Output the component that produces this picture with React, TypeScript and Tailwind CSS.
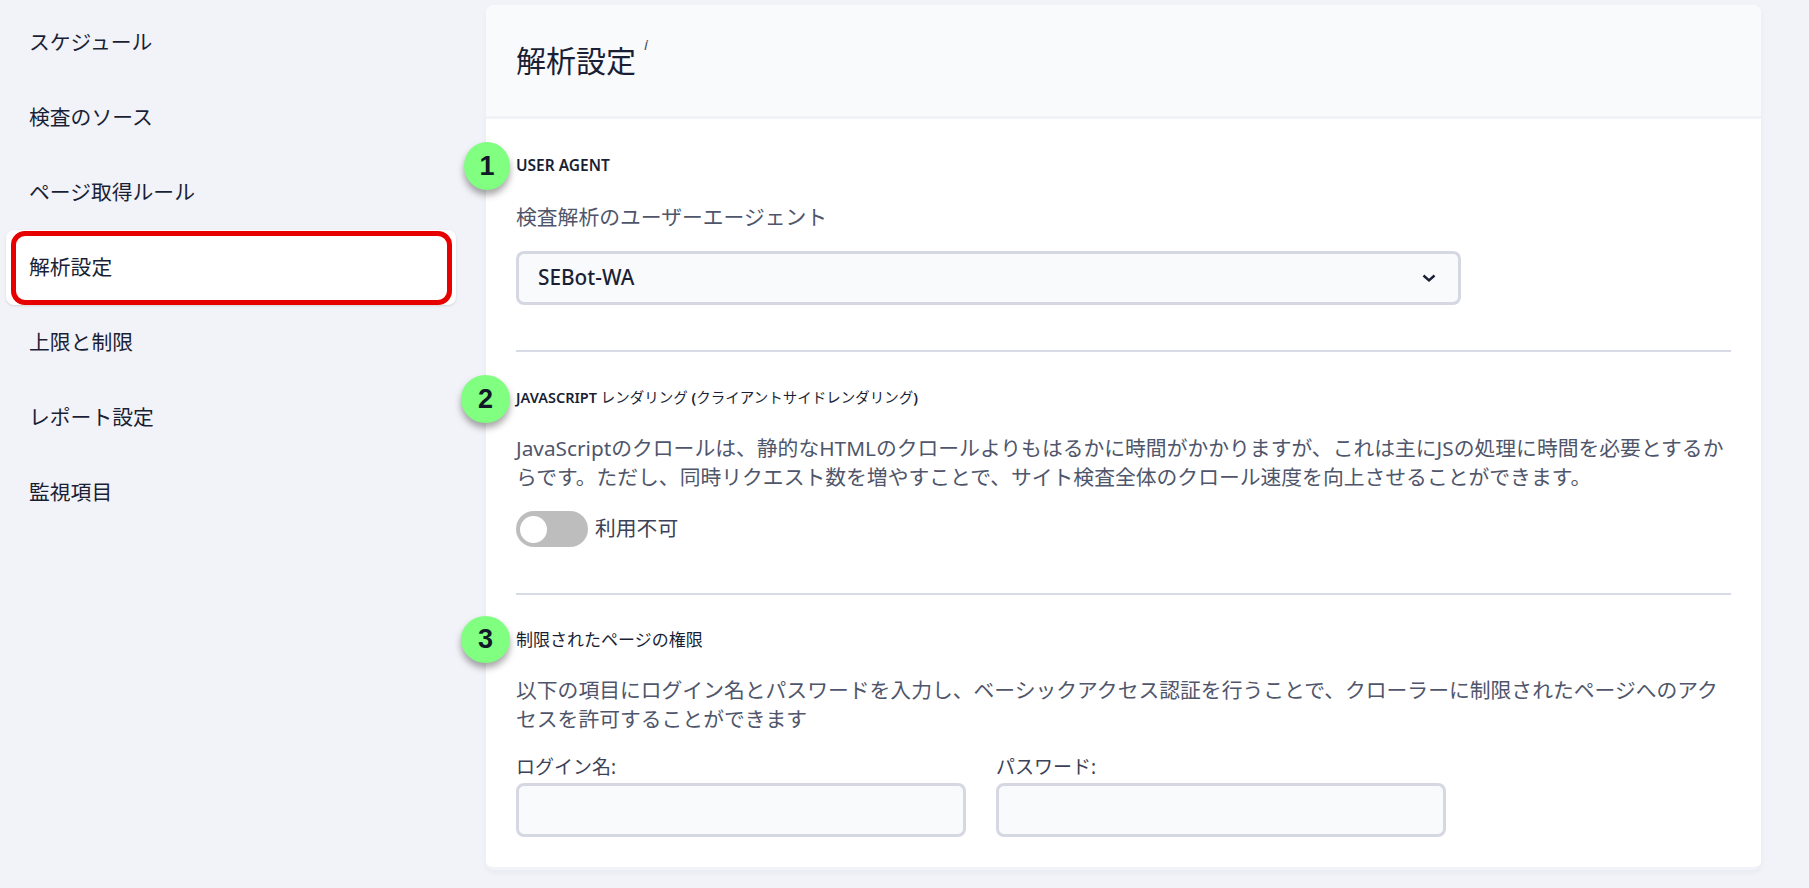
import React from "react";

const navItems = ["スケジュール", "検査のソース", "ページ取得ルール", "解析設定", "上限と制限", "レポート設定", "監視項目"];

function Badge({ n, className }: { n: string; className: string }) {
  return (
    <div
      className={`absolute flex items-center justify-center rounded-[50%] bg-[#80ff80] font-['Liberation_Sans',sans-serif] text-[27px] font-bold text-[#111827] shadow-[0_5px_7px_rgba(0,0,0,0.35)] ${className}`}
    >
      {n}
    </div>
  );
}

function Field({ label }: { label: string }) {
  return (
    <div className="w-[450px]">
      <div className="h-[24px] text-[19px] leading-[24px] text-[#3c4257]">{label}</div>
      <div className="mt-[4px] h-[54px] rounded-lg border-[3px] border-[#d5d7e2] bg-[#f9fafc]" />
    </div>
  );
}

export default function App() {
  return (
    <div className="relative flex h-[888px] w-full overflow-hidden bg-[#f2f3f8] font-['Noto_Sans','Noto_Sans_CJK_JP',sans-serif] text-[#1a1f36]">
      <nav className="w-[486px] shrink-0 pt-[5px] pl-[6px]">
        {navItems.map((item, i) => (
          <div
            key={item}
            className={`relative flex h-[75px] w-[450px] items-center rounded-lg pl-[23px] text-[20.8px] ${
              i === 3 ? "bg-white shadow-sm" : ""
            }`}
          >
            {item}
            {i === 3 && (
              <div className="absolute top-[1px] right-[4px] bottom-0 left-[5px] rounded-[14px] border-[5px] border-[#e80000]" />
            )}
          </div>
        ))}
      </nav>

      <main className="mt-[5px] h-[865px] w-[1275px] shrink-0 rounded-lg border-b-[3px] border-[#f2f3f8] bg-white shadow-[0_3px_6px_rgba(0,0,0,0.04)]">
        <header className="flex h-[114px] items-center rounded-t-lg border-b-[3px] border-[#f2f3f8] bg-[#f9fafc] px-[30px]">
          <h1 className="text-[30px] leading-[40px] font-normal">
            解析設定
            <sup className="ml-[8px] align-[14px] text-[15px] leading-none text-[#4f566b] italic">i</sup>
          </h1>
        </header>

        <section className="mx-[30px] border-b-2 border-[#d8dae5] pt-[34px] pb-[45px]">
          <h2 className="h-[24px] text-[15.5px] leading-[24px] font-semibold">USER AGENT</h2>
          <p className="mt-[26px] h-[29px] text-[20.8px] leading-[29px] text-[#4f566b]">検査解析のユーザーエージェント</p>
          <div className="mt-[19px] flex h-[54px] w-[945px] items-center justify-between rounded-lg border-[3px] border-[#d5d7e2] bg-[#f9fafc] pr-[22px] pl-[19px]">
            <span className="text-[20.8px] font-medium">SEBot-WA</span>
            <svg width="14" height="10" viewBox="0 0 14 10" fill="none" stroke="#1a1f36" strokeWidth="2.4" aria-hidden="true">
              <path d="M1.5 2.5 7 7.5 12.5 2.5" />
            </svg>
          </div>
        </section>

        <section className="mx-[30px] border-b-2 border-[#d8dae5] pt-[33px] pb-[46px]">
          <h2 className="h-[24px] text-[14.5px] leading-[24px] font-semibold whitespace-nowrap">
            JAVASCRIPT <span className="font-normal">レンダリング</span> (<span className="font-normal">クライアントサイドレンダリング</span>)
          </h2>
          <p className="mt-[25px] text-[20.8px] leading-[29px] text-[#4f566b]">
            JavaScriptのクロールは、静的なHTMLのクロールよりもはるかに時間がかかりますが、これは主にJSの処理に時間を必要とするからです。ただし、同時リクエスト数を増やすことで、サイト検査全体のクロール速度を向上させることができます。
          </p>
          <div className="mt-[19px] flex items-center">
            <div className="flex h-[36px] w-[72px] items-center rounded-full bg-[#bdbdbd] pl-[4px]">
              <div className="size-[27px] rounded-full bg-white" />
            </div>
            <span className="ml-[7px] text-[20.8px] text-[#3c4257]">利用不可</span>
          </div>
        </section>

        <section className="mx-[30px] pt-[33px] pb-[30px]">
          <h2 className="h-[24px] text-[17px] leading-[24px] font-normal">制限されたページの権限</h2>
          <p className="mt-[24px] text-[20.8px] leading-[28.5px] text-[#4f566b]">
            以下の項目にログイン名とパスワードを入力し、ベーシックアクセス認証を行うことで、クローラーに制限されたページへのアクセスを許可することができます
          </p>
          <div className="mt-[22px] flex gap-[30px]">
            <Field label="ログイン名:" />
            <Field label="パスワード:" />
          </div>
        </section>
      </main>

      <Badge n="1" className="top-[142px] left-[464px] h-[48px] w-[46px]" />
      <Badge n="2" className="top-[375px] left-[461px] h-[48px] w-[49px]" />
      <Badge n="3" className="top-[616px] left-[461px] h-[47px] w-[49px]" />
    </div>
  );
}
